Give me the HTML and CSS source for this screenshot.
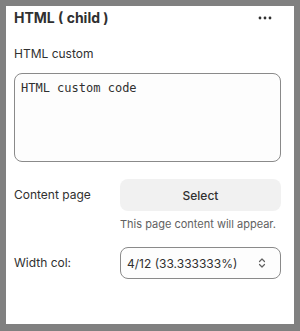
FILE: index.html
```html
<!DOCTYPE html>
<html>
<head>
<meta charset="utf-8">
<link rel="stylesheet" href="styles.css">
</head>
<body>
<div class="panel">
  <div class="header">
    <h2 class="title">HTML ( child )</h2>
    <svg class="more" width="16" height="16" viewBox="0 0 16 16"><circle cx="3" cy="8" r="1.4" fill="#303030"/><circle cx="8" cy="8" r="1.4" fill="#303030"/><circle cx="13" cy="8" r="1.4" fill="#303030"/></svg>
  </div>
  <div class="field">
    <div class="label">HTML custom</div>
    <div class="textarea">HTML custom code</div>
  </div>
  <div class="row">
    <div class="row-label">Content page</div>
    <div class="row-control">
      <div class="btn">Select</div>
      <div class="help">This page content will appear.</div>
    </div>
  </div>
  <div class="row row-select">
    <div class="row-label">Width col:</div>
    <div class="row-control">
      <div class="select">
        <span>4/12 (33.333333%)</span>
        <svg width="12" height="14" viewBox="0 0 12 14"><path d="M3.5 5.5 6 3l2.5 2.5M3.5 8.5 6 11l2.5-2.5" fill="none" stroke="#616161" stroke-width="1.2" stroke-linecap="round" stroke-linejoin="round"/></svg>
      </div>
    </div>
  </div>
</div>
</body>
</html>
```
FILE: styles.css
```css
html, body { margin: 0; padding: 0; }
body {
  background: #808080;
  font-family: Inter, "Noto Sans", sans-serif;
  color: #303030;
  padding: 6px 6px 7px 6px;
  box-sizing: border-box;
  height: 331px;
}
.panel {
  background: #fff;
  height: 318px;
  box-sizing: border-box;
  padding: 4px 13px 0 8px;
}
.header {
  display: flex;
  align-items: center;
  justify-content: space-between;
  height: 16px;
}
.title {
  margin: 0;
  font-size: 14px;
  font-weight: 650;
  line-height: 16px;
}
.more { margin-right: 8px; }
.field { margin-top: 20px; }
.label {
  font-size: 12px;
  line-height: 16px;
}
.textarea {
  margin-top: 11px;
  height: 89px;
  box-sizing: border-box;
  border: 1px solid #8a8a8a;
  border-radius: 8px;
  background: #fdfdfd;
  font-family: "DejaVu Sans Mono", monospace;
  font-size: 12px;
  line-height: 16px;
  padding: 6px 6px;
}
.row {
  display: flex;
  align-items: flex-start;
  margin-top: 17px;
}
.row-label {
  width: 106px;
  font-size: 12px;
  line-height: 32px;
}
.row-control { flex: 1; }
.btn {
  height: 32px;
  background: #f1f1f1;
  border-radius: 8px;
  display: flex;
  align-items: center;
  justify-content: center;
  font-size: 12px;
  font-weight: 500;
}
.help {
  font-size: 11px;
  color: #616161;
  line-height: 16px;
  margin-top: 5px;
}
.row-select { margin-top: 15px; }
.select {
  height: 32px;
  box-sizing: border-box;
  border: 1px solid #8a8a8a;
  border-radius: 8px;
  background: #fdfdfd;
  display: flex;
  align-items: center;
  justify-content: space-between;
  padding: 0 12px 0 6px;
  font-size: 12px;
}
```
